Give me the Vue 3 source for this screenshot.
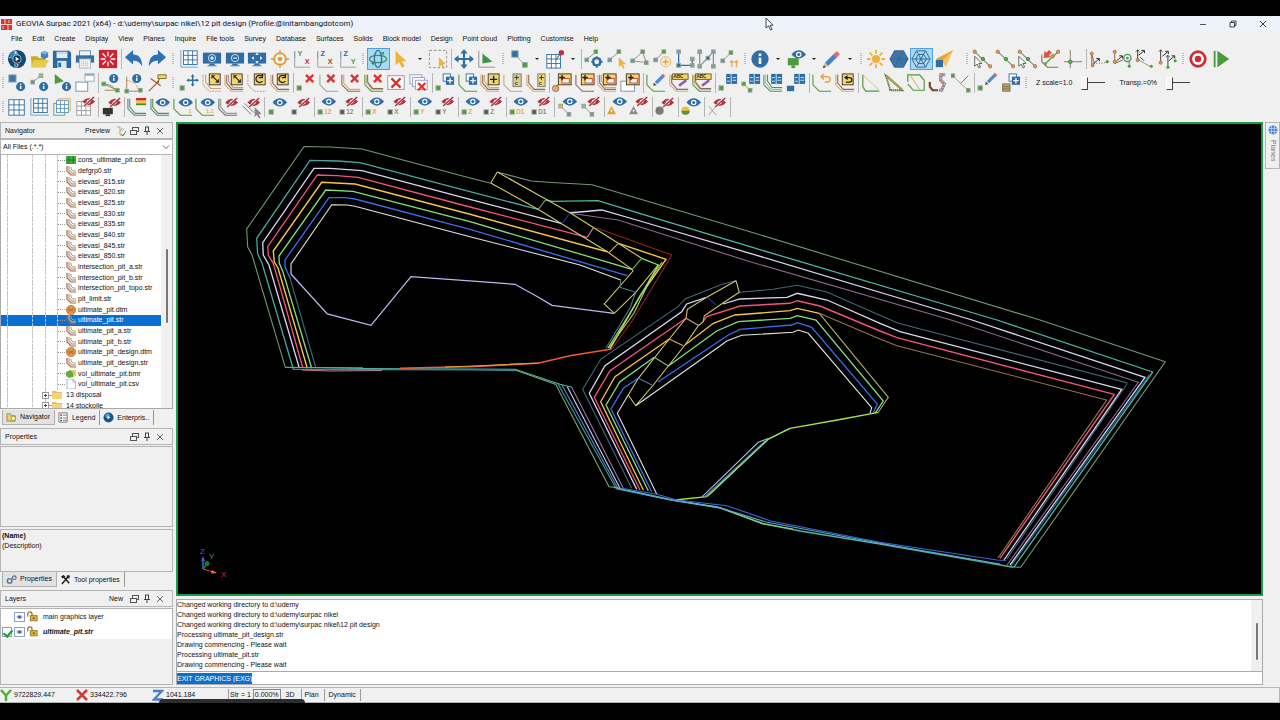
<script setup>
import { ref } from 'vue'

const BLUE = '#2f6ea5'
const GREEN = '#4f9a3c'
const TAN = '#d6a878'
const BROWN = '#8d6a50'
const GOLD = '#eeb33c'
const RED = '#d8352c'
const GREY = '#6c6c6c'

/* ---- drawing helpers for the toolbar icons (22 x 22 grid) ---- */
const L = (d, c, w = 1, extra = '') => `<path d="${d}" fill="none" stroke="${c}" stroke-width="${w}" ${extra}/>`
const F = (d, c) => `<path d="${d}" fill="${c}"/>`
const R = (x, y, w, h, c, s = 'none') => `<rect x="${x}" y="${y}" width="${w}" height="${h}" fill="${c}" stroke="${s}"/>`
const C = (x, y, r, c, s = 'none', w = 1) => `<circle cx="${x}" cy="${y}" r="${r}" fill="${c}" stroke="${s}" stroke-width="${w}"/>`
const T = (x, y, t, c, s = 7) => `<text x="${x}" y="${y}" fill="${c}" font-size="${s}" font-weight="bold" font-family="Liberation Sans, Arial, sans-serif">${t}</text>`

const eye = (x = 13, y = 6) => F(`M${x - 8} ${y}Q${x} ${y - 9} ${x + 8} ${y}Q${x} ${y + 9} ${x - 8} ${y}Z`, BLUE) + C(x, y, 3, '#fff') + C(x, y, 1.7, BLUE)
const noEye = (x = 14, y = 6) => F(`M${x - 7} ${y}Q${x} ${y - 8} ${x + 7} ${y}Q${x} ${y + 8} ${x - 7} ${y}Z`, '#b0333c') + C(x, y, 2.2, '#f3dede') + L(`M${x - 5} ${y + 5}L${x + 5} ${y - 5}`, '#f0f0f0', 2.6) + L(`M${x - 5} ${y + 5}L${x + 6} ${y - 5}`, '#a8303a', 1.5)
const node = (x, y, c = GREEN) => R(x - 2, y - 2, 4, 4, c, '#8fa58f')
const sq = (c = GREEN) => R(1, 14, 5, 5, c, '#aab8aa')
const str = (c, o = 0) => L(`M${1 + o} 2V${13 - o}L${8 + o / 2} ${20 - o}H21`, c, 1.2)
const str3 = (a, b, c) => str(a, 0) + str(b, 2) + str(c, 4)
const yBox = (x, y, w = 11, h = 11) => R(x, y, w, h, '#f6d66c', '#3b3526')
const plus = (x, y, c, s = 3, w = 1.6) => L(`M${x - s} ${y}H${x + s}M${x} ${y - s}V${y + s}`, c, w)
const redX = (x, y, s = 4) => L(`M${x - s} ${y - s}L${x + s} ${y + s}M${x + s} ${y - s}L${x - s} ${y + s}`, RED, 2.6)
const grid = (x, y, s, c) => R(x, y, s, s, '#fff', c) + L(`M${x + s / 3} ${y}v${s}M${x + 2 * s / 3} ${y}v${s}M${x} ${y + s / 3}h${s}M${x} ${y + 2 * s / 3}h${s}`, c, 1)
const info = (x, y, r = 5) => C(x, y, r, BLUE) + R(x - 0.8, y - 0.8, 1.6, r * 0.7, '#fff') + R(x - 0.8, y - 3.2, 1.6, 1.5, '#fff')
const monitor = (c) => R(1, 4, 20, 12, c) + R(8, 16, 6, 2, c) + R(6, 18, 10, 1, c)
const axes = (a, b) => L('M3 2V20H20', '#9a9a9a', 1) + L('M3 3V10', '#6fa0d8') + T(6, 8, a, a === 'Z' ? BLUE : GREEN, 8) + T(14, 16, b, b === 'X' ? '#c33030' : GREEN, 8)
const cursor = (x, y, c, s = 'none') => `<path d="M${x} ${y}v11l2.6-2.4l2 4.2l1.8-.9l-2-4h3.6z" fill="${c}" stroke="${s}" stroke-width=".9"/>`
const pencil = (x, y) => L(`M${x} ${y}L${x + 8} ${y - 8}`, '#4d8fd0', 3.6) + L(`M${x + 7} ${y - 7}l2-2`, '#dd6a70', 3.6) + F(`M${x - 3} ${y + 3}l.6-3.6l3 3z`, '#444')
const plusBox = (x, y) => R(x, y, 8, 8, '#fff', BLUE) + R(x + 3, y + 3, 9, 9, BLUE) + plus(x + 7.5, y + 7.5, '#fff', 3, 1.4)
const calc = (x, y) => R(x, y, 12, 11, BLUE) + L(`M${x + 5.5} ${y}v11M${x + 7} ${y + 4}h4M${x + 7} ${y + 7}h4M${x + 1} ${y + 4}h3M${x + 1} ${y + 8}h3`, '#dbe9f5', 1)
const seg = (x1, y1, x2, y2, c = GREEN) => L(`M${x1} ${y1}L${x2} ${y2}`, '#8a8a8a') + node(x1, y1, c) + node(x2, y2, '#6e8fa8')
const snapLine = () => L('M3 3L20 19', '#7e8e5e', 1.2) + C(3, 3, 1.8, '#e9a15f', '#a86a35') + C(20, 19, 1.8, '#e9a15f', '#a86a35') + C(12, 11, 1.8, '#54b84c', '#33832c')
const arrowNE = (x, y) => L(`M${x} ${y}L${x + 6} ${y - 5}M${x + 3} ${y - 5.5}h3.5v3`, '#333', 1.1)
const bezel = (x, y) => L(`M${x} ${y + 13}V${y}M${x - 2} ${y + 2}l2-2l2 2`, '#333', 1)
const hexa = 'M6 2H16L21 11L16 20H6L1 11Z'

const icons = {
  sphere: C(11, 11, 10, '#14486f') + C(8, 7, 5, '#3f83b3') + C(11, 11, 4.5, '#0d3351', '#a9c7dc') + F('M9.5 8.5V13.5L13.5 11Z', '#fff') + T(2, 12, '·', '#fff') + T(8, 6, 'x', '#fff', 5) + T(8, 20, 'i,r', '#fff', 5),
  open: F('M1 8H8L10 10H17V20H2Z', '#c9a92b') + F('M4 12H21L16 20H1Z', '#e6cc48') + F('M12 4L16 2L20 4V9L16 11L12 9Z', '#3f83c4') + F('M12 4L16 6L20 4L16 2Z', '#7fb4e4'),
  save: F('M1 2H19L21 4V21H1Z', '#2a689d') + R(5, 3, 12, 7, '#e4edf5') + R(5, 4, 12, 1, '#a8c3da') + R(6, 13, 10, 8, '#dfe6ec') + R(7, 15, 3, 5, '#2a689d'),
  print: R(5, 2, 12, 6, '#eef3f7', '#5d89ad') + R(1, 7, 20, 8, '#34719f') + R(5, 11, 12, 10, '#f6efe4', '#a4b6c4') + L('M7 14h8M7 16h8M7 18h8', '#d6a56c', 1, 'stroke-dasharray="1 1"'),
  burst: R(1, 1, 20, 20, '#cf2230') + L('M11 3V8M11 14V19M3 11H8M14 11H19M5 5L9 9M13 13L17 17M17 5L13 9M9 13L5 17', '#fff', 1.4),
  undo: F('M1 9L10 1V6C17 6 20 11 20 19C17 14 14 13 10 13V17Z', '#2c72b4'),
  redo: F('M21 9L12 1V6C5 6 2 11 2 19C5 14 8 13 12 13V17Z', '#2c72b4'),
  gridax: L('M2 1V20H21', '#6f9fd0') + grid(5, 2, 15, BLUE),
  monplus: monitor(BLUE) + C(11, 10, 4, 'none', '#dce9f4') + plus(11, 10, '#fff', 2, 1.2),
  monminus: monitor(BLUE) + C(11, 10, 4, 'none', '#dce9f4') + L('M9 10H13', '#fff', 1.2),
  monmove: monitor(BLUE) + F('M11 4l2 2.5h-4zM11 16l2-2.5h-4zM5 10l2.5-2v4zM17 10l-2.5-2v4z', '#fff'),
  locate: C(11, 11, 6.5, 'none', '#dd9b3a', 2) + C(11, 11, 2.5, '#dd9b3a') + L('M11 1V6M11 16V21M1 11H6M16 11H21', '#dd9b3a', 1.6),
  axYX: axes('Y', 'X'), axZX: axes('Z', 'X'), axZY: axes('Z', 'Y'),
  orbit: `<ellipse cx="11" cy="11" rx="9.5" ry="4" fill="none" stroke="#3a8f5b" stroke-width="1.4"/><ellipse cx="11" cy="11" rx="4" ry="9.5" fill="none" stroke="${BLUE}" stroke-width="1.4"/>` + F('M3 15l5-1l-2 4zM14 4l4-1l-1 4z', '#3a8f5b'),
  cursor: F('M5 2V18L9 14.5L12 20.5L15 19L12 13.5H17Z', GOLD),
  marquee: L('M1.5 1.5H20.5V20.5H1.5Z', '#8a8a8a', 1, 'stroke-dasharray="3 2"') + cursor(12, 9, GOLD),
  move: L('M11 4V18M4 11H18', BLUE, 2.4) + F('M11 0l4 5h-8zM11 22l4-5h-8zM0 11l5-4v8zM22 11l-5-4v8z', BLUE),
  tri: L('M2 2V20H20', '#8a8a8a') + F('M6 5L17 14L6 16Z', '#3f9440'),
  nodes: L('M6 6L17 17', '#999') + R(3, 2, 7, 7, BLUE, '#8aa') + R(15, 15, 5, 5, GREEN, '#8a8'),
  gridpin: grid(2, 6, 15, BLUE) + L('M12 12L17 5', '#777', 1.4) + C(18, 4, 3, '#c2303f'),
  seggear: seg(13, 3, 3, 12) + C(14, 14, 4, 'none', BLUE, 2.6) + L('M14 8V10M14 18V20.5M8 14H10M18 14H20.5M10 10l1 1M17 17l1 1M18 10l-1 1M10 18l1-1', BLUE, 2),
  segcur: seg(13, 3, 3, 12) + cursor(13, 9, GOLD),
  segtri: seg(15, 3, 4, 13) + L('M4 13L19 15L15 3', '#8a8a8a') + node(19, 15, '#6e8fa8'),
  segplus: seg(13, 3, 4, 12) + C(15, 14, 5.5, '#fbf3df', '#e6b050') + plus(15, 14, '#e6a63c', 3.5, 1.6),
  seg1: L('M4 3V18H19V11', BLUE, 1.4) + node(4, 3, '#8a9aa0') + node(4, 18, BLUE) + node(19, 18, '#8a9aa0') + node(19, 11, '#999'),
  seg2: L('M3 3V19M3 19L18 3V19', '#6e8798', 1.2) + node(3, 3, '#8a9aa0') + node(3, 19, '#8a9aa0') + node(12, 10, BLUE) + node(18, 3, '#8a9aa0') + node(18, 19, '#8a9aa0'),
  seg3: seg(12, 4, 3, 13) + L('M13 20V13M11 15l2-2l2 2M18 20V13M16 15l2-2l2 2', '#e6a63c', 1.3),
  info: C(11, 11, 9.5, BLUE) + R(9.6, 9.5, 2.8, 7, '#fff') + R(9.6, 5, 2.8, 2.8, '#fff'),
  moneye: R(2, 10, 12, 8, GREEN) + R(6, 18, 4, 3, GREEN) + eye(14, 6),
  pencil: L('M5 17L15 7', '#3f86c8', 5) + L('M14 8l4-4', '#de6f76', 5) + F('M1 21l2-6l4 4z', '#d9b98e') + F('M1 21l1-3l2 2z', '#333'),
  sun: C(11, 11, 4.5, GOLD) + L('M11 1V5M11 17V21M1 11H5M17 11H21M4 4L7 7M15 15L18 18M18 4L15 7M7 15L4 18', GOLD, 2.2),
  hexf: `<path d="${hexa}" fill="#3f75a8" stroke="#2d5f8f"/>` + L('M6 2L16 20M16 2L6 20M1 11H21', '#35689a', 1),
  hexw: L(hexa + 'M6 2L16 20M16 2L6 20M1 11H21', '#2f5f90', 1) + L('M8 6H14L17 11L14 16H8L5 11Z', '#2f5f90', 1),
  cone: F('M21 1L2 11L12 16Z', '#e6a236') + F('M21 1L9 13L13 20Z', '#f2c562') + R(2, 12, 8, 8, BLUE),
  snap1: snapLine() + cursor(3, 8, '#fff', '#444'),
  snap2: snapLine(),
  snap3: snapLine() + cursor(2, 8, '#fff', '#444'),
  snap4: L('M2 6V14L8 20H20', BROWN, 1.2) + L('M6 16L20 3', '#4fa046', 1.4) + C(20, 3, 1.8, '#e9a15f', '#a86a35') + C(14, 8, 1.8, '#e9a15f', '#a86a35') + C(6, 16, 1.8, '#54b84c') + F('M4 10L5 2L7 4L10 1L13 4L10 7L12 9Z', '#e0523a'),
  snap5: L('M8 1V21M1 14H21', '#94704f', 1) + C(8, 14, 2, '#54b84c', '#33832c'),
  pick1: L('M3 6V19M3 6L6 16', '#7b5a44') + L('M5 15Q12 17 20 14', '#444', 1, 'stroke-dasharray="1 2"') + C(3, 5, 1.6, '#e9a15f', '#a86a35') + C(4, 18, 1.6, '#e9a15f', '#a86a35') + C(20, 14, 1.8, GREEN) + arrowNE(5, 16),
  pick2: L('M3 3V16L12 12', '#7b5a44') + C(3, 3, 1.7, '#e9a15f', '#a86a35') + C(3, 14, 1.7, '#e9a15f', '#a86a35') + C(17, 10, 4, 'none', '#3f9a55', 1.4) + C(17, 10, 1.5, GREEN) + L('M19 12V19', '#777') + C(19, 19, 1.7, GREEN) + arrowNE(5, 13),
  pick3: bezel(4, 1) + arrowNE(5, 7) + L('M5 12L19 20', '#7e9a6e') + C(4, 12, 1.7, '#e9a15f', '#a86a35') + C(19, 19, 1.7, GREEN) + L('M7 9l4 4', '#333'),
  pick4: bezel(4, 1) + bezel(12, 7) + arrowNE(6, 8) + arrowNE(13, 13) + C(4, 15, 1.7, '#e9a15f', '#a86a35') + C(20, 13, 1.7, GREEN) + C(12, 20, 1.7, GREEN),
  record: C(11, 11, 8, '#fff', '#cf2a35', 3) + C(11, 11, 3.6, '#cf2a35'),
  play: R(3, 2, 2, 18, '#4a9a37') + F('M7 2L20 11L7 20Z', '#4a9a37'),

  ptinfo: R(2, 2, 8, 8, '#3f75a8', '#9ab0c4') + info(15, 15),
  seginfo: seg(12, 3, 3, 10, '#aaa') + info(15, 15),
  triinfo: F('M3 1L13 9L3 12Z', GREEN) + info(16, 15),
  winpair: R(1, 10, 13, 10, '#fff', '#6f92b5') + R(11, 1, 10, 8, '#fff', '#9ab') + R(11, 1, 10, 2, '#86a9cc'),
  angi1: L('M3 12L18 19L4 19', '#a07a52') + L('M4 12Q13 13 16 19', GREEN) + node(3, 12) + node(18, 19) + info(14, 6),
  angi2: L('M3 4V20M3 20H19', '#a07a52') + L('M3 8Q15 10 16 20', '#c88b3a', 1, 'stroke-dasharray="2 1"') + node(3, 20) + node(18, 19) + info(14, 6),
  angi3: L('M2 20L12 10M4 6L15 14M12 10L15 3', '#c4483a', 1.3) + R(12, 2, 9, 4, '#f5d867', '#7b6a2a') + C(12, 10, 1.5, GREEN),
  sqmove: sq() + plus(15, 8, BLUE, 5, 1.6) + F('M15 1l2 3h-4zM15 15l2-3h-4zM8 8l3-2v4zM22 8l-3-2v4z', BLUE),
  ybmove1: L('M1 2V13L8 20H21', '#caa07a', 1.2, 'stroke-dasharray="2 1"') + str('#caa07a', 3) + yBox(8, 1, 12, 12) + L('M11 3L18 10M11 6V3H14M18 7V10H15', '#222', 1.2),
  ybmove2: str3(TAN, BROWN, '#b98') + yBox(8, 1, 12, 12) + L('M11 3L18 10M11 6V3H14M18 7V10H15', '#222', 1.2),
  ybrot1: L('M1 2V13L8 20H21', '#caa07a', 1.2, 'stroke-dasharray="2 1"') + yBox(8, 1, 12, 12) + L('M17 9A4 4 0 1 1 17 4M17 1V5H13', '#222', 1.4),
  ybrot2: str(TAN) + str(BROWN, 2) + yBox(8, 1, 12, 12) + L('M17 9A4 4 0 1 1 17 4M17 1V5H13', '#222', 1.4),
  sqx: sq() + redX(15, 6),
  strx1: str('#9aa79a') + redX(13, 6),
  strx2: str(BROWN) + str(TAN, 2) + redX(15, 6),
  strx3: str(GREEN) + str(TAN, 2) + str(BROWN, 3) + redX(15, 6),
  boxx: R(2, 3, 18, 15, '#fff', '#7f97b5') + redX(11, 11, 5),
  stackx: R(1, 2, 13, 10, '#fff', '#86a0bf') + R(4, 5, 13, 10, '#fff', '#86a0bf') + R(7, 8, 13, 10, '#fff', '#86a0bf') + redX(14, 15, 4),
  sqplus: sq() + plusBox(9, 1),
  strplus: str(GREEN) + plusBox(9, 1),
  str3plus: str3(TAN, BROWN, TAN) + yBox(9, 1, 12, 12) + plus(15, 7, '#222', 4, 1.6),
  calc1: str('#caa07a') + R(11, 1, 9, 14, '#d6cd8c', '#777') + plus(15, 5, '#333', 2.5, 1) + T(13, 13, 'c', '#333', 6),
  calc2: str(TAN) + str(BROWN, 2) + R(13, 1, 8, 14, '#e9d578', '#777') + plus(17, 5, '#333', 2.5, 1) + T(14, 13, 'c', '#333', 6),
  newa: C(4, 17, 3.5, '#e2a878', '#a07050') + L('M5 15L10 9', BROWN) + yBox(7, 1, 14, 12) + R(11, 6, 8, 5, '#fff', RED) + plus(11, 5, '#222', 3, 1.5),
  newb: str(BROWN) + yBox(7, 1, 14, 12) + R(11, 6, 8, 5, '#fff', RED) + plus(11, 5, '#222', 3, 1.5),
  newc: str3(TAN, BROWN, TAN) + yBox(7, 1, 14, 12) + R(11, 6, 8, 5, '#fff', RED) + plus(12, 5, '#222', 3, 1.5),
  newd: R(1, 9, 15, 11, '#fff', '#6f92b5') + yBox(7, 1, 14, 12) + R(11, 6, 8, 5, '#fff', RED) + plus(12, 5, '#222', 3, 1.5),
  edit: str(GREEN) + pencil(11, 11),
  abc1: str(TAN) + str(BROWN, 2) + R(4, 1, 17, 6, '#f5d867', '#6b5a20') + T(5, 6, 'ABC', '#222', 5) + L('M11 14L19 8', '#8a5cc0', 3),
  abc2: str(GREEN) + str(TAN, 2) + str(BROWN, 3) + R(4, 1, 17, 6, '#f5d867', '#6b5a20') + T(5, 6, 'ABC', '#222', 5) + L('M11 14L19 8', '#8a5cc0', 3),
  calcp: sq() + calc(9, 1),
  calcs: L('M3 12L10 19', GOLD, 1.2) + node(3, 12) + node(10, 19) + calc(9, 1),
  calcl: str3(GREEN, '#9bb', GREEN) + calc(9, 1),
  calcb: R(1, 14, 8, 6, BLUE) + calc(9, 1),
  back1: str(GREEN) + L('M11 4H17A3 3 0 0 1 17 10H14M13 1L10 4L13 7', '#e6a040', 1.6),
  back2: str(TAN) + str(BROWN, 2) + yBox(8, 1, 12, 12) + L('M11 5H16A2 2 0 0 1 16 10H12M14 3L11 5L14 7', '#222', 1.4),
  shp1: L('M2 2V15L5 20H20', GREEN, 1.3) + L('M2 2L20 19', '#e3bb70'),
  shp2: L('M2 3L7 19H20Z', '#54702f', 2, 'stroke-dasharray="1.5 .7"') + L('M3 3L20 18', '#b59a52', 2),
  shp3: L('M2 10V2H15L20 8V19H8L2 12', GREEN, 1.3) + L('M5 3L15 18', '#e3bb70', 1.3),
  shp4: L('M2 10V15L5 19H11', '#6d4a35', 2.4) + L('M19 2H14V8L18 12L15 19H12', '#b07a68', 3.4) + L('M19 2H14V8L18 12L15 19H12', '#9db9e8', 2, 'stroke-dasharray="2 2"'),
  shp5: L('M2 3L10 11', '#9a9a6a') + L('M10 12L19 3', '#d04a3c') + L('M10 11L19 19', '#caa050') + node(2, 3) + node(19, 19),
  sqpen: sq() + pencil(12, 10),
  listplus: R(3, 12, 8, 8, '#c0a868', '#776a44') + L('M3 15h8M3 17.5h8', '#776a44') + plusBox(10, 1),

  grid: grid(2, 3, 17, BLUE),
  gridax2: L('M1 1V20H21', '#6f9fd0') + grid(4, 2, 15, BLUE),
  grid3: R(7, 2, 13, 13, '#f8f1dc', '#d8ac4e') + R(2, 7, 12, 13, '#eef6e8', '#6fa35c') + grid(5, 4, 13, '#5f93bb'),
  gridoff: grid(2, 5, 15, '#999') + noEye(15, 5),
  monoff: R(2, 12, 11, 7, '#333') + R(5, 19, 5, 2, '#333') + noEye(15, 6),
  strflag: str('#5a7fae') + str(GREEN, 2) + R(10, 1, 11, 3, '#c33030') + R(10, 4, 11, 3, '#f0c838') + R(10, 7, 11, 2, '#3f8f3a'),
  streye: str('#5a7fae') + str(GREEN, 2) + eye(14, 6),
  streye1: str(GREEN) + eye(14, 6) + T(17, 18, '1', '#e8b23c', 6),
  streye11: str(GREEN) + eye(14, 6) + T(12, 18, '1.1', '#e8b23c', 6),
  stroff: str(GREY) + str('#999', 2) + noEye(15, 6),
  offcur: L('M2 10L11 19M4 7L14 17', GREY) + noEye(14, 6) + cursor(15, 11, '#888'),
  peye: sq() + eye(), poff: sq('#555') + noEye(),
  leye: seg(3, 10, 12, 19, GOLD) + eye(13, 5), loff: seg(3, 10, 12, 19, '#aaa') + noEye(14, 5),
  teye: F('M5 10L10 19H0Z', '#e2a52e') + C(5, 15, 1, '#fff') + eye(14, 5),
  toff: F('M5 10L10 19H0Z', '#8d8d8d') + C(5, 15, 1, '#fff') + noEye(14, 5),
  coff: C(5, 15, 4.5, '#7a7a7a') + noEye(14, 6),
  ceye: C(5, 15, 4.5, '#e8c23a') + F('M.5 15A4.5 4.5 0 0 0 9.5 15Z', '#4e9a3c') + eye(14, 6),
  xoff: L('M2 10L10 20M10 10L2 20', '#999') + noEye(14, 6)
}
for (const k of ['12', 'X', 'Y', 'Z', 'D1']) {
  icons['e' + k] = sq() + T(8, 19, k, '#e6ab3c', 7) + eye(13, 5)
  icons['o' + k] = sq('#555') + T(8, 19, k, '#8a8a8a', 7) + noEye(14, 5)
}

/* ---- toolbar rows: g = icon group, others are spacers ---- */
const g = (w, names) => ({ t: 'g', w, names: names.split(' ') })
const grip = (w) => ({ t: 'grip', w })
const sep = { t: 'sep', w: 4 }
const drop = (w) => ({ t: 'drop', w })
const rows = [
  [grip(6), g(113, 'sphere open save print burst'), sep, g(45, 'undo redo'), grip(10),
    g(181, 'gridax monplus monminus monmove locate axYX axZX axZY'), grip(8), g(45, 'orbit cursor'), drop(15), g(22, 'marquee'), sep,
    g(45, 'move tri'), grip(9), g(23, 'nodes'), drop(13), g(23, 'gridpin'), drop(13), sep,
    g(158, 'seggear segcur segtri segplus seg1 seg2 seg3'), grip(8), g(22, 'info'), drop(14), g(22, 'moneye'), drop(14), g(22, 'pencil'), drop(14), grip(8),
    g(90, 'sun hexf hexw cone'), { t: 'gap', w: 8 }, grip(8), g(113, 'snap1 snap2 snap3 snap4 snap5'), sep, g(90, 'pick1 pick2 pick3 pick4'), grip(9), g(45, 'record play')],
  [grip(6), g(90, 'ptinfo seginfo triinfo winpair'), sep, g(68, 'angi1 angi2 angi3'), grip(10),
    g(113, 'sqmove ybmove1 ybmove2 ybrot1 ybrot2'), sep, g(135, 'sqx strx1 strx2 strx3 boxx stackx'), sep,
    g(113, 'sqplus strplus str3plus calc1 calc2'), sep, g(90, 'newa newb newc newd'), sep, g(68, 'edit abc1 abc2'), sep,
    g(90, 'calcp calcs calcl calcb'), sep, g(45, 'back1 back2'), sep, g(112, 'shp1 shp2 shp3 shp4 shp5'), sep, g(45, 'sqpen listplus'), grip(10)],
  [grip(6), g(90, 'grid gridax2 grid3 gridoff'), sep, g(22, 'monoff'), sep, g(136, 'strflag streye streye1 streye11 stroff offcur'), sep,
    g(46, 'peye poff'), sep, g(44, 'e12 o12'), sep, g(44, 'eX oX'), sep, g(44, 'eY oY'), sep, g(44, 'eZ oZ'), sep, g(44, 'eD1 oD1'), sep,
    g(46, 'leye loff'), sep, g(44, 'teye toff'), sep, g(22, 'coff'), sep, g(22, 'ceye'), sep, g(22, 'xoff'), sep]
]
const active = ['orbit', 'hexw']

const menus = ['File', 'Edit', 'Create', 'Display', 'View', 'Planes', 'Inquire', 'File tools', 'Survey', 'Database', 'Surfaces', 'Solids', 'Block model', 'Design', 'Point cloud', 'Plotting', 'Customise', 'Help']

const files = [
  ['con', 'cons_ultimate_pit.con'], ['str', 'defgrp0.str'], ['str', 'elevasi_815.str'], ['str', 'elevasi_820.str'],
  ['str', 'elevasi_825.str'], ['str', 'elevasi_830.str'], ['str', 'elevasi_835.str'], ['str', 'elevasi_840.str'],
  ['str', 'elevasi_845.str'], ['str', 'elevasi_850.str'], ['str', 'intersection_pit_a.str'], ['str', 'intersection_pit_b.str'],
  ['str', 'intersection_pit_topo.str'], ['str', 'pit_limit.str'], ['dtm', 'ultimate_pit.dtm'], ['str', 'ultimate_pit.str'],
  ['str', 'ultimate_pit_a.str'], ['str', 'ultimate_pit_b.str'], ['dtm', 'ultimate_pit_design.dtm'], ['str', 'ultimate_pit_design.str'],
  ['bmr', 'vol_ultimate_pit.bmr'], ['csv', 'vol_ultimate_pit.csv'], ['dir', '13 disposal'], ['dir', '14 stockpile']
].map(([kind, name]) => ({ kind, name }))
const selected = ref('ultimate_pit.str')

const fileIcons = {
  con: R(0, 1, 10, 8, '#3fae3f') + L('M3 1v8M7 1v8M0 5h10', '#1c7a24', 1),
  str: L('M1 0V5L5 9H10', '#a5654c', 1.2) + L('M3 0V4L6 7H10', '#c9a58e', 1.4) + L('M5 1V3L7 5H10', '#8fae7c', 1),
  dtm: F('M3 0H7L10 3V7L7 10H3L0 7V3Z', '#dd9550') + L('M2 2L8 8M8 2L2 8M0 5H10', '#b46c2c', 0.8),
  bmr: F('M0 3L4 1L7 3V8L3 9L0 7Z', '#67ab3e') + F('M4 1H10V7L7 8V3Z', '#e6cc5c'),
  csv: '<path d="M1 0H7L9.5 2.5V10H1Z" fill="#fff" stroke="#8ba4cf" stroke-width=".8"/>' + L('M7 0V3H9.5', '#8ba4cf', 0.8),
  dir: F('M0 1H4L5 2H10V9H0Z', '#eebf58') + F('M0 3H10V9H0Z', '#f7d27c')
}

/* ---- pit design strings, in drawing coordinates ---- */
const lines = [
  ['#6f9a72', '490,183 470,178 362,149 330,147 304,146.5 246.7,229 247.7,247 252,255 285.3,367.3 363,367.7'],
  ['#6f9a72', '497.3,172 531,181 552,182.5 592,184.7 640,199 750,231.7 1040,320 1165.3,361.7 1020.7,567.3 1013,567'],
  ['#46a8a0', '538,209.3 470,191.7 360,162.7 338,161 310,160.3 256.7,238.3 257.7,254 262,263 293.3,369.3', 1.3],
  ['#4ab8a2', '546,200 552,201.3 598,200.7 637,212.7 750,246.7 997,320 1152.7,372 1014,567', 1.3],
  ['#d8d8f6', '562,223.7 470,199.3 362,170.7 330,168.3 314,168.3 262.7,242.7 263.3,255 269,265 299.3,368', 1.3],
  ['#d8d8fa', '570,212.7 580,212 601.7,210 640,221 750,253.3 972,320 1145,377.3 1010,565', 1.3],
  ['#8f6690', '570,213.3 618,220 750,261.7 951,320 1138.3,382.3 1007,565'],
  ['#2f6f9f', '1149,375 1011,566'],
  ['#f2547a', '587.3,237.3 470,207 358,177.3 337,175.7 317.3,175 267.7,246.7 268.3,255 273.3,263.3 302.7,367.5', 1.3],
  ['#94231e', '596.7,228 671.7,255 655,283 632,321 612,349'],
  ['#f5c648', '607.3,251.7 470,214.3 355,184 321.7,182.3 273.3,251 274.3,262 278,268 307.3,368.3', 1.4],
  ['#f5c648', '618.3,243.3 666,259.3 640,296 610,349', 1.4],
  ['#84e07e', '632,269.3 470,221.7 353,191.3 325.7,190 279,256 279.3,263.3 283,272 311.7,368.3', 1.3],
  ['#84e07e', '641.7,258.3 658.3,265 632,310 608,348', 1.3],
  ['#b5d84a', '662,262 650,280 634,313 609,348'],
  ['#3b6cec', '627.3,275.7 470,229.3 355,199 345,197.7 329,197.7 285,260 285,267 290,278', 1.3],
  ['#3a6c80', '290,278 315.7,367.3'],
  ['#e2e2e0', '620.7,280 580,265 470,236.7 355,206.3 347,205 331.7,204.7 291,264 291,274', 1.1],
  ['#b9b9f4', '291,274 327.3,314 371,325.3 411,276.7 480,281.7 515,284.3 538,297 552,305.3 614,313.3', 1.3],
  ['#4a7884', '635.7,292.3 630,308 606,348'],
  ['#cfc964', '497.3,172 490.7,183 538,209.3 607.3,251.7 632,269.3 633,271 604.3,304 614.3,313.3 635.7,292.3 658,265'],
  ['#cfc964', '497.3,172 546,199.3 570,212.7 618.3,243.3 641.7,258.3'],
  ['#7a9a70', '546,199.3 538.3,209.3'], ['#2433b0', '570,213 562,223.7'], ['#c48faf', '594,226.7 587.3,237.3'],
  ['#d8a860', '618.3,243.3 609,252.7'], ['#8aa858', '641.7,258.3 632.3,269.3'], ['#4a7884', '620.7,280 620,287.3 635.7,292.3'],
  ['#4ab8a2', '285.3,367.3 363,368.5 470,369 515,369.3 560,384.3 572,387.3'],
  ['#3f86a8', '293,369.3 470,369.8 515,370.5', 1.3],
  ['#c07f90', '302,370 330,371 382,370.5'],
  ['#f25a34', '400,368.3 440,367.3 470,366.7 538,363.3 570,355.7 611.7,349', 1.4],
  ['#e8a03c', '445,367 480,365.7 538,363'],
  ['#79a871', '515,370 556,384.5 560,392.7 609,486.7 614,487.3'],
  ['#3f9f98', '558,384 616,488.3'], ['#4f8ad0', '562,385 618,488.5'], ['#d0d0f4', '567.3,386.7 620,488.3'], ['#a070a4', '571.7,387.3 623.3,488.3'],

  ['#41667c', '736,280.7 722,284.3 685,299 678,306.7 600.7,359.3 582.7,389.3 585,394 631.7,488.3'],
  ['#41667c', '739.3,292.3 773,289.3 797.3,285.3 826.7,292 897,322.7 905,325 1126.7,382.7 1127,384 1006.7,559.3'],
  ['#d8d8f8', '705.7,297.7 686.7,304 681.7,311.7 605,365.7 589.3,393.3 636.7,489.3', 1.3],
  ['#d8d8f8', '723,304 740,299 787,297.3 797.3,293.3 827,300 880,323.3 900,331.7 1121.7,389.3 1004,560', 1.3],
  ['#f2547a', '686,318.3 610,370.7 594.3,397.3 640,490', 1.3],
  ['#f2547a', '703,321.7 706.7,316.7 740,306 790,303.3 797.3,300.7 820,306 880,331 897,337.7 1114.3,394.3 1000,558.3', 1.4],
  ['#f5c648', '669.3,339 615,376.7 600.7,401.7 643.3,490', 1.3],
  ['#f5c648', '685,345 713.3,323.3 735,315 790,310.7 797.3,308.3 819.3,313.3', 1.3],
  ['#967552', '819.3,313.3 880,339 897,345.7 1106.7,400 998,558'],
  ['#a9b35a', '819.3,313.3 888.3,397.3 878.3,412.3'],
  ['#84e07e', '654.3,357.3 620,381.7 606,405 648.3,490.7', 1.3],
  ['#84e07e', '668.3,366 716.7,331 738.3,321.7 790,318.3 797.3,315.7 816,320 883.3,401 875,413.3', 1.3],
  ['#3b6cec', '638.3,378.3 623.3,388.3 611,409 651.7,491.7', 1.3],
  ['#3b6cec', '658.3,381.7 728.3,335 740,329.3 791.7,325 797.3,322.7 811.7,327.3 877.3,404 873,413.3', 1.3],
  ['#e2e2e0', '635.7,405.7 720,346 726.7,341 741.7,335.3 793,332.3 798.3,330 808.3,333.3 871.7,407.7 870,413.5', 1.1],
  ['#e2e2e0', '628.3,395 617.3,413.3 656.7,494', 1.1],
  ['#cfc964', '736,280.7 705,298.3 687.3,309.3 686,318.3 669.3,339 638.3,378.3 628.3,395 635.7,405.7 653.3,385 668.3,366 685,345 698.3,325.7 703.3,321.7 704.3,315.7 723.3,302.7 739.3,292.3 736,280.7'],
  ['#2433b0', '708,297.7 716,305'], ['#d8988c', '686,318.3 699,325.7'], ['#d8a860', '669.3,339 683.3,345.7'], ['#8ab878', '654.3,357.3 668.3,366'], ['#4d7e98', '638.3,378.3 653.3,385.7'],
  ['#a9e03e', '878.3,412.3 840,419.5 790,428.3 768.3,439 706.7,496.7 675,500', 1.3],
  ['#b3b3de', '768.3,438.5 758.3,442.3 702.3,496.7'], ['#4f86b8', '765,441 704.5,497'], ['#84e07e', '790,428.3 768,439.5 709,495'],
  ['#4ab8a2', '614,487.3 640,493 677,501 720,507.7 763,523.5 800,531 880,544 1013.3,567.3', 1.4],
  ['#8ad07c', '680,501 720,508 763,524 793,529'],
  ['#3f63d8', '623,488.5 656,494 677,500 727,505.7 770,520.7 813,529.3 880,542.3 997,560 1006,560.5'],
  ['#5aa8d4', '616,488.7 670,500 716,506.5 766,522 880,543.3 1000,564']
].map(([color, points, w]) => ({ color, points, w: w || 1.1 }))

const messages = ['Changed working directory to d:\\udemy', 'Changed working directory to d:\\udemy\\surpac nikel', 'Changed working directory to d:\\udemy\\surpac nikel\\12 pit design', 'Processing ultimate_pit_design.str', 'Drawing commencing - Please wait', 'Processing ultimate_pit.str', 'Drawing commencing - Please wait']
const command = ref('EXIT GRAPHICS (EXG)')
const zscale = ref(0)
const transp = ref(0)
const layerOn = ref(true)

const undock = R(3.5, 1.5, 6, 4, 'none', '#555') + R(1.5, 4.5, 6, 4, '#f0f0f0', '#555')
const pin = L('M3 1H7M3.5 1V5M6.5 1V5M2 5.5H8M5 5.5V9', '#444', 1)
const close = L('M2 2L8 8M8 2L2 8', '#555', 0.9)
const headIcons = [['Undock', undock], ['Pin', pin], ['Close', close]]
const lock = R(5, 5, 8, 6, '#ddb640', '#8d7326') + L('M2 6V3A2 2 0 0 1 7 3V5', '#8d7326', 1.4) + R(8, 7, 2, 2, '#6e5a1c')
const eyeSmall = F('M1 5Q5.5 0 10 5Q5.5 10 1 5Z', '#b4b6dc') + C(5.5, 5, 1.8, '#4d50a0')
</script>

<template>
  <div class="screen">
    <div class="window">
      <header class="title">
        <svg class="logo" viewBox="0 0 11 11"><rect width="11" height="11" fill="#d3382f" /><path d="M0 5.500H11M4 0V5M7 6V11M8 1V4M2 7V10" stroke="#f7d0ca" stroke-width="1" /></svg>
        <h1>GEOVIA Surpac 2021 (x64) - d:\udemy\surpac nikel\12 pit design (Profile:@initambangdotcom)</h1>
        <div class="winctl">
          <button aria-label="Minimise"><svg viewBox="0 0 10 10"><path d="M2 5.500H8" stroke="#555" /></svg></button>
          <button aria-label="Restore"><svg viewBox="0 0 10 10"><path d="M2 3.500H6.500V8H2ZM3.500 3V2H8V6.500H7" fill="none" stroke="#333" stroke-width=".9" /></svg></button>
          <button aria-label="Close"><svg viewBox="0 0 10 10"><path d="M2 2L8 8M8 2L2 8" stroke="#222" stroke-width=".9" /></svg></button>
        </div>
      </header>

      <nav class="menu"><button v-for="m in menus" :key="m">{{ m }}</button></nav>

      <div class="toolbars">
        <div v-for="(row, ri) in rows" :key="ri" class="row" role="toolbar">
          <template v-for="(it, i) in row" :key="i">
            <div v-if="it.t === 'g'" class="group" :style="{ width: it.w + 'px' }">
              <button v-for="n in it.names" :key="n" :class="{ on: active.includes(n) }" :aria-label="n">
                <svg viewBox="0 0 22 22" v-html="icons[n]" />
              </button>
            </div>
            <button v-else-if="it.t === 'drop'" class="drop" aria-label="More" :style="{ width: it.w + 'px' }"><i /></button>
            <span v-else :class="it.t" :style="{ width: it.w + 'px' }" />
          </template>
          <div v-if="ri === 1" class="sliders">
            <label for="zs">Z scale=1.0</label><input id="zs" v-model="zscale" type="range">
            <label for="tr">Transp.=0%</label><input id="tr" v-model="transp" type="range">
          </div>
        </div>
      </div>

      <div class="body">
        <aside class="left">
          <div class="head"><h2>Navigator</h2><button class="word">Preview</button>
            <button class="mini" aria-label="Tree"><svg viewBox="0 0 10 10"><path d="M1 1H4V9H8M4 4H7" fill="none" stroke="#c9a35a" /><path d="M5 8l2 2l3-5" fill="none" stroke="#4f9a3c" /><path d="M5 2h3v3h-3z" fill="#c7d3e0" /></svg></button>
            <button v-for="[n, ic] in headIcons" :key="n" class="mini" :aria-label="n"><svg viewBox="0 0 10 10" v-html="ic" /></button>
          </div>
          <div class="combo">
            <select aria-label="File filter"><option>All Files (.*.*)</option></select>
            <svg viewBox="0 0 8 8"><path d="M1 2.500L4 5.500L7 2.500" fill="none" stroke="#555" stroke-width=".9" /></svg>
          </div>
          <div class="tree">
            <ul>
              <li v-for="f in files" :key="f.name" :class="{ folder: f.kind === 'dir', sel: f.name === selected }">
                <span class="guides"><i /><i /><i /></span>
                <span class="joint" /><span class="stem" />
                <svg viewBox="0 0 10 10" v-html="fileIcons[f.kind]" />
                <button @click="selected = f.name">{{ f.name }}</button>
              </li>
            </ul>
            <div class="rail"><span class="thumb" /></div>
          </div>
          <div class="tabs">
            <button class="cur"><svg viewBox="0 0 12 12"><path d="M1 2H5L6 4H10V10H1Z" fill="#e8cf6a" stroke="#8e7a2c" stroke-width=".8" /><circle cx="8" cy="7" r="2.500" fill="#f7f0cf" stroke="#8e7a2c" stroke-width=".8" /></svg>Navigator</button>
            <button><svg viewBox="0 0 12 12"><path d="M1 1h9v10h-9z" fill="#fff" stroke="#777" /><path d="M2.500 2.500h2v2h-2z" fill="#d33" /><path d="M2.500 5.500h2v2h-2z" fill="#3a3" /><path d="M2.500 8.500h2v1.500h-2z" fill="#35c" /><path d="M5.500 3.500h4M5.500 6.500h4M5.500 9h4" stroke="#555" stroke-width=".8" /></svg>Legend</button>
            <button><svg viewBox="0 0 12 12"><circle cx="6" cy="6" r="5.500" fill="#17568c" /><circle cx="5" cy="4" r="2.500" fill="#5d9aca" /><path d="M5 4L8 6L5 8Z" fill="#fff" /></svg>Enterpris..</button>
          </div>
          <div class="head second"><h2>Properties</h2>
            <button v-for="[n, ic] in headIcons" :key="n" class="mini" :aria-label="n"><svg viewBox="0 0 10 10" v-html="ic" /></button>
          </div>
          <div class="props" />
          <div class="desc"><b>(Name)</b><p>(Description)</p></div>
          <div class="tabs low">
            <button class="cur"><svg viewBox="0 0 12 12"><circle cx="4" cy="7.500" r="2.500" fill="none" stroke="#5f6f80" stroke-width="1.500" /><circle cx="9" cy="4" r="2" fill="none" stroke="#5f6f80" stroke-width="1.300" /></svg>Properties</button>
            <button><svg viewBox="0 0 12 12"><path d="M2 11L9 3M3 2L10 10" stroke="#222" stroke-width="1.600" /><path d="M1 3L4 1L6 3L3 5ZM8 1L11 2L10 5L7 4Z" fill="#222" /></svg>Tool properties</button>
          </div>
          <div class="head second"><h2>Layers</h2><button class="word">New</button>
            <button v-for="[n, ic] in headIcons" :key="n" class="mini" :aria-label="n"><svg viewBox="0 0 10 10" v-html="ic" /></button>
          </div>
          <div class="layers">
            <div class="layer"><span class="tick" /><span class="eye"><svg viewBox="0 0 11 10" v-html="eyeSmall" /></span><svg class="lock" viewBox="0 0 14 12" v-html="lock" /><span>main graphics layer</span></div>
            <div class="layer"><label class="tick box"><input v-model="layerOn" type="checkbox" aria-label="ultimate_pit.str"></label><span class="eye"><svg viewBox="0 0 11 10" v-html="eyeSmall" /></span><svg class="lock" viewBox="0 0 14 12" v-html="lock" /><b>ultimate_pit.str</b></div>
          </div>
        </aside>

        <main class="center">
          <div class="view">
            <svg viewBox="178 124 1083 470">
              <polyline v-for="(l, i) in lines" :key="i" :points="l.points" fill="none" :stroke="l.color" :stroke-width="l.w" />
              <path d="M203 569V559" stroke="#5558d8" stroke-width="1.500" /><path d="M203 556l2 5h-4z" fill="#5558d8" />
              <path d="M203 569L207 564" stroke="#1f8a2a" stroke-width="1.500" /><circle cx="207" cy="563.500" r="2.500" fill="#1f7a26" />
              <path d="M203 569L216 573" stroke="#d8402c" stroke-width="1.300" /><path d="M217 573l-5-3l-1 3.500z" fill="#f06a4c" />
              <g class="axis"><text x="200" y="554" fill="#5a5ac8">Z</text><text x="209" y="559" fill="#35a050">Y</text><text x="221" y="577" fill="#d23030">X</text></g>
            </svg>
          </div>
          <div class="console">
            <div class="log">
              <div class="lines"><p v-for="(m, i) in messages" :key="i">{{ m }}</p></div>
              <div class="rail"><span class="thumb" /></div>
            </div>
            <div class="cmd"><input v-model="command" aria-label="Command" size="19"></div>
          </div>
        </main>

        <aside class="right"><button><svg viewBox="0 0 10 10"><circle cx="5" cy="5" r="4.500" fill="#4a84dc" /><path d="M1 3.500H9M1 6.500H9M3.500 1V9M6.500 1V9" stroke="#b9d1f5" stroke-width=".8" /></svg><span>Planes</span></button></aside>
      </div>

      <footer class="status">
        <span class="coord"><svg viewBox="0 0 12 12"><path d="M1 1L6 6.500L11 1M6 6V12" fill="none" stroke="#4fae3c" stroke-width="2.500" /></svg>9722829.447</span>
        <span class="coord"><svg viewBox="0 0 12 12"><path d="M1 1L11 11M11 1L1 11" fill="none" stroke="#cf3b35" stroke-width="2.500" /></svg>334422.796</span>
        <span class="coord"><svg viewBox="0 0 12 12"><path d="M1 2H10L2 10.500H11" fill="none" stroke="#4a7ccc" stroke-width="2.300" /></svg>1041.184</span>
        <span class="cell">Str = 1</span><span class="cell boxed">0.000%</span><span class="cell three">3D</span><span class="cell plan">Plan</span><span class="cell dyn">Dynamic</span>
      </footer>
    </div>
    <span class="pill" />
    <svg class="pointer" viewBox="0 0 9 14"><path d="M1 1V11L3.500 8.800L5.500 13L7 12.200L5 8.300H8Z" fill="#fff" stroke="#333" stroke-width=".9" /></svg>
  </div>
</template>

<style>
body { background: #000; overflow: hidden; }
</style>

<style scoped>
.screen {
  height: 100vh; box-sizing: border-box; padding: 16px 0 17px; position: relative;
  background: #000; color: #111; font: 7px/10px "Liberation Sans", Arial, sans-serif;
}
.screen * { box-sizing: border-box; }
.window { height: 100%; display: flex; flex-direction: column; background: #f0f0f0; overflow: hidden; }
button { font: inherit; color: inherit; background: none; border: 0; padding: 0; margin: 0; white-space: nowrap; }
svg { display: block; flex: none; }
h1, h2, p, ul { margin: 0; padding: 0; font: inherit; }
ul { list-style: none; }

.title { flex: none; height: 16px; display: flex; align-items: center; background: #edf2fb; }
.logo { width: 11px; height: 11px; margin: 0 4px 0 1px; }
.title h1 { flex: 1; font: 8px/14px Roboto, "Noto Sans", sans-serif; }
.winctl { display: flex; gap: 20px; padding-right: 12px; }
.winctl svg { width: 10px; height: 10px; }
.menu { flex: none; height: 14px; display: flex; gap: 10px; padding-left: 11px; align-items: center; }

.toolbars { flex: none; padding-bottom: 3px; }
.row { height: 24px; display: flex; align-items: center; }
.row:first-child { height: 25px; }
.group { display: flex; flex: none; }
.group button { flex: 1; min-width: 0; height: 22px; display: flex; justify-content: center; }
.group button.on { background: #a9d8f5; outline: 1px solid #4f9fd8; outline-offset: -1px; }
.group svg { width: 20px; height: 22px; }
.grip, .sep, .drop, .gap { flex: none; height: 22px; display: flex; align-items: center; justify-content: center; }
.grip::before { content: ""; width: 2px; height: 12px; background: repeating-linear-gradient(#bcbcbc 0 1px, #f0f0f0 1px 2px); }
.sep::before { content: ""; width: 1px; height: 20px; background: #b5b5b5; }
.drop i { border: 2px solid transparent; border-top-color: #222; border-bottom: 0; }
.sliders { display: flex; align-items: center; padding-left: 5px; }
.sliders input { appearance: none; width: 24px; height: 14px; margin: 0 14px 0 9px; background: linear-gradient(#444, #444) center 6px / 100% 1px no-repeat; }
.sliders input::-webkit-slider-thumb { appearance: none; width: 7px; height: 13px; background: #f4f4f4; border: 1px solid; border-color: #fff #444 #444 #fff; }

.body { flex: 1; min-height: 0; display: flex; }
.left { flex: none; width: 176px; display: flex; flex-direction: column; padding-right: 3px; }
.head { flex: none; height: 17px; border: 1px solid #b4b4b4; display: flex; align-items: center; padding: 0 7px 0 4px; gap: 3px; }
.head h2 { flex: 1; }
.second { margin-top: 3px; }
.head .word { margin-right: 3px; }
.mini svg { width: 10px; height: 10px; }
.combo { flex: none; height: 16px; border: 1px solid #b4b4b4; background: #fff; display: flex; align-items: center; padding-right: 2px; }
.combo select { flex: 1; appearance: none; border: 0; background: none; font: inherit; color: inherit; padding: 0 0 0 2px; }
.combo svg { width: 8px; height: 8px; }

.tree { flex: 1; min-height: 0; display: flex; background: #fff; border: 1px solid #a8a8a8; border-top: 0; overflow: hidden; }
.tree ul { flex: 1; height: 256px; display: flex; flex-direction: column; }
.tree li { flex: 1; min-height: 0; display: flex; align-items: center; }
.guides { align-self: stretch; flex: none; display: flex; width: 44px; padding-left: 6px; }
.guides i { flex: none; width: 25px; border-left: 1px dashed #c4c4c4; }
.guides i:nth-child(2) { width: 13px; }
.guides i:last-child { width: 1px; }
.joint { align-self: stretch; flex: none; width: 1px; margin-left: 12px; border-left: 1px dashed #c4c4c4; }
.stem { flex: none; width: 7px; margin-right: 1px; border-top: 1px dotted #999; }
.tree li svg { width: 10px; height: 10px; }
.tree li button { margin-left: 2px; line-height: 10px; }
.folder .joint {
  align-self: center; width: 7px; height: 7px; margin-left: -3px; border: 1px solid #999;
  background: linear-gradient(#444, #444) center / 3px 1px no-repeat, linear-gradient(#444, #444) center / 1px 3px no-repeat, #fff;
}
.folder .stem { width: 2px; }
.tree .folder button { margin-left: 4px; }
.tree .sel { background: #0a6fd0; color: #fff; }
.rail { flex: none; width: 11px; background: #f0f0f0; display: flex; justify-content: center; align-items: flex-start; }
.thumb { width: 2px; background: #777; border-radius: 1px; }
.tree .thumb { margin-top: 94px; height: 74px; }

.tabs { flex: none; height: 15px; margin-top: 1px; display: flex; padding-left: 2px; }
.tabs button { display: flex; align-items: center; gap: 3px; padding: 0 4px 0 3px; border-right: 1px solid #999; }
.tabs .cur { background: #e2e2e2; border: 1px solid #b0b0b0; border-top: 0; }
.tabs svg { width: 11px; height: 11px; }
.low { margin-top: 0; }
.props { flex: none; height: 81px; margin-top: 1px; border: 1px solid #b4b4b4; }
.desc { flex: none; height: 43px; margin-top: 2px; border: 1px solid #b4b4b4; padding: 1px; }
.layers { flex: none; height: 77px; margin: 1px 0 2px; border: 1px solid #b4b4b4; }
.layer { height: 15px; background: #fff; display: flex; align-items: center; padding-left: 1px; }
.tick { width: 10px; height: 10px; margin-right: 2px; flex: none; }
.tick.box { border: 1px solid #8aa0b8; background: #fff; display: block; }
.tick input { appearance: none; display: block; width: 8px; height: 8px; margin: 0; }
.tick input:checked::before { content: ""; display: block; width: 4px; height: 7px; margin-left: 2px; border: solid #1f9a2c; border-width: 0 2px 2px 0; transform: rotate(40deg); }
.eye { width: 11px; height: 10px; border: 1px solid #8aa0c8; flex: none; margin-right: 1px; }
.eye svg { width: 9px; height: 8px; }
.lock { width: 12px; height: 11px; margin-right: 5px; }
.layer b { font-style: italic; }

.center { flex: 1; min-width: 0; display: flex; flex-direction: column; }
.view { flex: 1; min-height: 0; border: 2px solid #1c9a44; background: #000; }
.view svg { width: 100%; height: 100%; }
.axis { font: 8px "Liberation Sans", Arial, sans-serif; }
.console { flex: none; margin: 3px 0 2px; }
.log { background: #fff; border: 1px solid #aaa; height: 73px; display: flex; }
.lines { flex: 1; }
.log .thumb { margin-top: 23px; height: 37px; }
.cmd { height: 13px; background: #fff; border: 1px solid #aaa; border-top: 0; display: flex; align-items: center; }
.cmd input { font: inherit; color: #fff; background: #0a6fd0; border: 0; padding: 0; height: 11px; field-sizing: content; }

.right { flex: none; width: 17px; padding-left: 2px; }
.right button { width: 15px; height: 47px; border: 1px solid #b4b4b4; display: flex; flex-direction: column; align-items: center; gap: 5px; padding-top: 2px; color: #777; }
.right svg { width: 10px; height: 10px; }
.right span { writing-mode: vertical-rl; }

.status { flex: none; height: 16px; display: flex; align-items: center; border: 1px solid #b4b4b4; border-left: 0; }
.coord { width: 76px; display: flex; align-items: center; gap: 2px; }
.coord svg { width: 12px; height: 12px; }
.cell { border-left: 1px solid #999; padding: 0 2px 0 1px; line-height: 12px; }
.boxed { border: 1px solid #888; line-height: 10px; padding: 0 1px; }
.three { border: 0; padding: 0 6px 0 5px; }
.plan { padding: 0 5px 0 3px; }
.dyn { padding: 0 4px; border-right: 1px solid #999; }
.pill { position: absolute; left: 159px; bottom: 17px; width: 146px; height: 4px; background: #2b2d31; border-radius: 6px 6px 0 0; }
.pointer { position: absolute; left: 765px; top: 17px; width: 9px; height: 14px; }
</style>
